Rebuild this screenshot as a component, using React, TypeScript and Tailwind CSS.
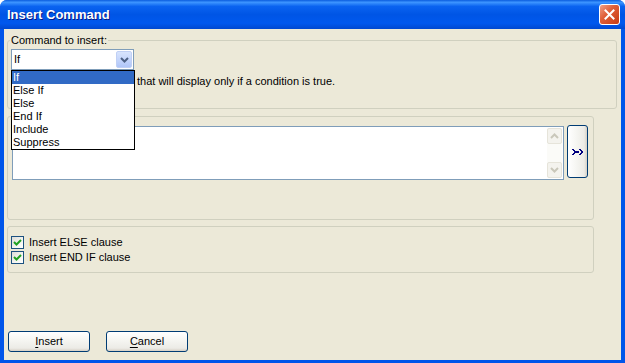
import React from "react";

function CloseButton() {
  return (
    <div className="w-[21px] h-[21px] rounded-[3px] border border-white bg-[linear-gradient(135deg,#F0A088_0%,#E0603A_40%,#C73A12_100%)] flex items-center justify-center">
      <svg width="11" height="11" viewBox="0 0 11 11">
        <path d="M1.5 1.5 L9.5 9.5 M9.5 1.5 L1.5 9.5" stroke="white" strokeWidth="2" strokeLinecap="square" />
      </svg>
    </div>
  );
}

function Check() {
  return (
    <div className="w-[13px] h-[13px] border border-[#1C5180] bg-[linear-gradient(135deg,#DCDCD7_0%,#F5F5F1_60%,#FFFFFF_100%)] flex items-center justify-center">
      <svg width="9" height="9" viewBox="0 0 9 9">
        <path d="M1 4 L3.5 6.5 L8 2" fill="none" stroke="#21A121" strokeWidth="2" />
      </svg>
    </div>
  );
}

function ScrollBtn({ up }: { up: boolean }) {
  return (
    <div className="w-[15px] h-[16px] rounded-[2px] border border-[#E6E4DA] bg-[#F4F3EE] flex items-center justify-center">
      <svg width="9" height="6" viewBox="0 0 9 6">
        <path d={up ? "M1 5 L4.5 1.5 L8 5" : "M1 1 L4.5 4.5 L8 1"} fill="none" stroke="#C9C7BA" strokeWidth="2" />
      </svg>
    </div>
  );
}

function XpButton({ label }: { label: string }) {
  return (
    <button className="w-[82px] h-[21px] rounded-[3px] border border-[#003C74] bg-[linear-gradient(to_bottom,#FFFFFF_0%,#F4F4F0_50%,#ECEBE6_85%,#D6D0C5_100%)] text-[11px] text-black leading-[13px]">
      <span className="underline underline-offset-[2px]">{label[0]}</span>
      {label.slice(1)}
    </button>
  );
}

export default function App() {
  const items = ["If", "Else If", "Else", "End If", "Include", "Suppress"];

  return (
    <div className="w-[625px] h-[363px] bg-white font-['Liberation_Sans',Arial,sans-serif] text-[11px] text-black">
      <div className="w-full h-full flex flex-col rounded-t-[7px] overflow-hidden bg-[#0055EA]">
        {/* title bar */}
        <div className="h-[29px] shrink-0 flex items-center justify-between pl-[7px] pr-[5px] bg-[linear-gradient(to_bottom,#0A5CDE_0%,#3D95FF_8%,#0A63F0_22%,#0055E5_50%,#0058EE_80%,#0048D0_100%)]">
          <span className="text-white font-bold text-[13px] leading-[16px] [text-shadow:1px_1px_0_#0A1883]">
            Insert Command
          </span>
          <CloseButton />
        </div>

        {/* body */}
        <div className="flex-1 mx-[4px] mb-[3px] bg-[#ECE9D8] flex flex-col pl-[3px] pr-[4px] pt-[5px]">
          <fieldset className="border border-[#D0D0BF] rounded-[3px] px-[3px] pb-[19px] h-[75px] relative z-10">
            <legend className="-ml-[1px] px-[1px] leading-[13px]">Command to insert:</legend>
            <div className="flex items-start">
              <div className="relative w-[123px] mt-[2px] shrink-0">
                <div className="h-[21px] border border-[#7F9DB9] bg-white flex items-center justify-between pl-[2px] pr-[1px]">
                  <span>If</span>
                  <div className="w-[16px] h-[17px] rounded-[2px] bg-[linear-gradient(to_bottom,#D8E4FD_0%,#C1D3FB_60%,#B0C6F8_100%)] border border-[#C0D0F5] flex items-center justify-center">
                    <svg width="9" height="6" viewBox="0 0 9 6">
                      <path d="M1 1 L4.5 4.5 L8 1" fill="none" stroke="#4D6185" strokeWidth="2" />
                    </svg>
                  </div>
                </div>
                <div className="absolute left-0 top-full w-[124px] border border-black bg-white flex flex-col">
                  {items.map((it, i) => (
                    <div
                      key={it}
                      className={`h-[13px] leading-[13px] pl-[1px] ${i === 0 ? "bg-[#316AC5] text-white" : ""}`}
                    >
                      {it}
                    </div>
                  ))}
                </div>
              </div>
              <p className="mt-[28px] ml-[3px] leading-[13px] whitespace-nowrap">
                that will display only if a condition is true.
              </p>
            </div>
          </fieldset>

          <div className="mt-[7px] mr-[23px] h-[104px] border border-[#D0D0BF] rounded-[3px] pl-[4px] pt-[9px] flex items-start gap-[3px]">
            <div className="w-[552px] h-[54px] border border-[#7F9DB9] bg-white flex justify-end p-[1px]">
              <div className="w-[15px] h-full bg-[#FBFBF8] flex flex-col justify-between">
                <ScrollBtn up />
                <ScrollBtn up={false} />
              </div>
            </div>
            <div className="w-[21px] h-[53px] -mt-[1px] rounded-[3px] border border-[#003C74] bg-[linear-gradient(to_right,#FFFFFF_0%,#F4F4F0_50%,#ECEBE6_85%,#D6D0C5_100%)] flex items-center justify-center">
              <svg width="12" height="6" viewBox="0 0 12 6" shapeRendering="crispEdges">
                <path d="M0 0h2v1H0zM1 1h2v1H1zM2 2h2v2H2zM1 4h2v1H1zM0 5h2v1H0z" fill="#000080" />
                <path d="M4 2h3v2H4z" fill="#000080" />
                <path d="M7 0h2v1H7zM8 1h2v1H8zM9 2h2v2H9zM8 4h2v1H8zM7 5h2v1H7z" fill="#000080" />
              </svg>
            </div>
          </div>

          <div className="mt-[6px] mr-[23px] h-[47px] border border-[#D0D0BF] rounded-[3px] pl-[3px] pt-[9px] flex flex-col gap-[2px]">
            <label className="flex items-center gap-[5px] leading-[13px]">
              <Check />
              <span>Insert ELSE clause</span>
            </label>
            <label className="flex items-center gap-[5px] leading-[13px]">
              <Check />
              <span>Insert END IF clause</span>
            </label>
          </div>

          <div className="mt-auto mb-[8px] flex gap-[16px] pl-[1px]">
            <XpButton label="Insert" />
            <XpButton label="Cancel" />
          </div>
        </div>
      </div>
    </div>
  );
}
